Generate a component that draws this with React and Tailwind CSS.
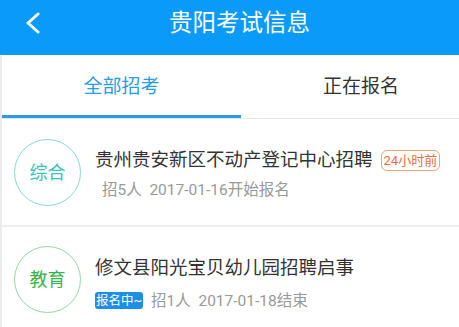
export default function App() {
  const font = { fontFamily: 'Roboto, "Noto Sans CJK SC", "Noto Sans", sans-serif' };
  return (
    <div className="w-[459px] h-[327px] overflow-hidden bg-white" style={font}>
      <div className="h-[55px] bg-[#0a9bfa] flex items-center relative">
        <svg className="absolute left-[25px] top-[12px]" width="16" height="22" viewBox="0 0 16 22">
          <path d="M13 2 L3 11 L13 20" fill="none" stroke="white" strokeWidth="3" strokeLinecap="round" strokeLinejoin="round" />
        </svg>
        <div className="w-full text-center text-white text-[23.5px] leading-none pb-[8px] pl-[20px]">贵阳考试信息</div>
      </div>
      <div className="border-l-2 border-[#ececec]">
        <div className="h-[64px] flex border-b border-[#e8e8e8]">
          <div className="w-[239px] flex items-center justify-center border-b-[3px] border-[#2a9be4] text-[#2a9be4] text-[19px] pt-[4px]">全部招考</div>
          <div className="flex-1 flex items-center justify-center text-[#333] text-[19px] pt-[1px] pl-[22px]">正在报名</div>
        </div>
        <div className="h-[108px] flex items-center pl-[12px] border-b-2 border-[#eeeeee]">
          <div className="w-[67px] h-[67px] rounded-full border border-[#8ad9d3] flex items-center justify-center text-[#3ec1b8] text-[18px]">综合</div>
          <div className="ml-[14px] flex flex-col gap-[8px] mt-[4px]">
            <div className="flex items-center">
              <span className="text-[18.5px] text-[#333] leading-[24px]">贵州贵安新区不动产登记中心招聘</span>
              <span className="ml-[8px] text-[13px] leading-[19px] text-[#e4703a] border border-[#eea27a] rounded-[6px] px-[2px]">24小时前</span>
            </div>
            <div className="text-[15.5px] text-[#999] leading-[20px] pl-[7px]">招5人&nbsp;&nbsp;2017-01-16开始报名</div>
          </div>
        </div>
        <div className="h-[100px] flex items-center pl-[12px]">
          <div className="w-[67px] h-[67px] rounded-full border border-[#94d9a4] flex items-center justify-center text-[#33b44c] text-[18px] mt-[4px]">教育</div>
          <div className="ml-[14px] flex flex-col gap-[11px] mt-[12px]">
            <div className="text-[18.5px] text-[#333] leading-[24px]">修文县阳光宝贝幼儿园招聘启事</div>
            <div className="flex items-center text-[15.5px] text-[#999] leading-[20px]">
              <span className="text-[12.5px] leading-[17px] bg-[#1d8fe6] text-white rounded-[3px] px-[1px]">报名中~</span>
              <span className="ml-[8px]">招1人&nbsp;&nbsp;2017-01-18结束</span>
            </div>
          </div>
        </div>
      </div>
    </div>
  );
}
